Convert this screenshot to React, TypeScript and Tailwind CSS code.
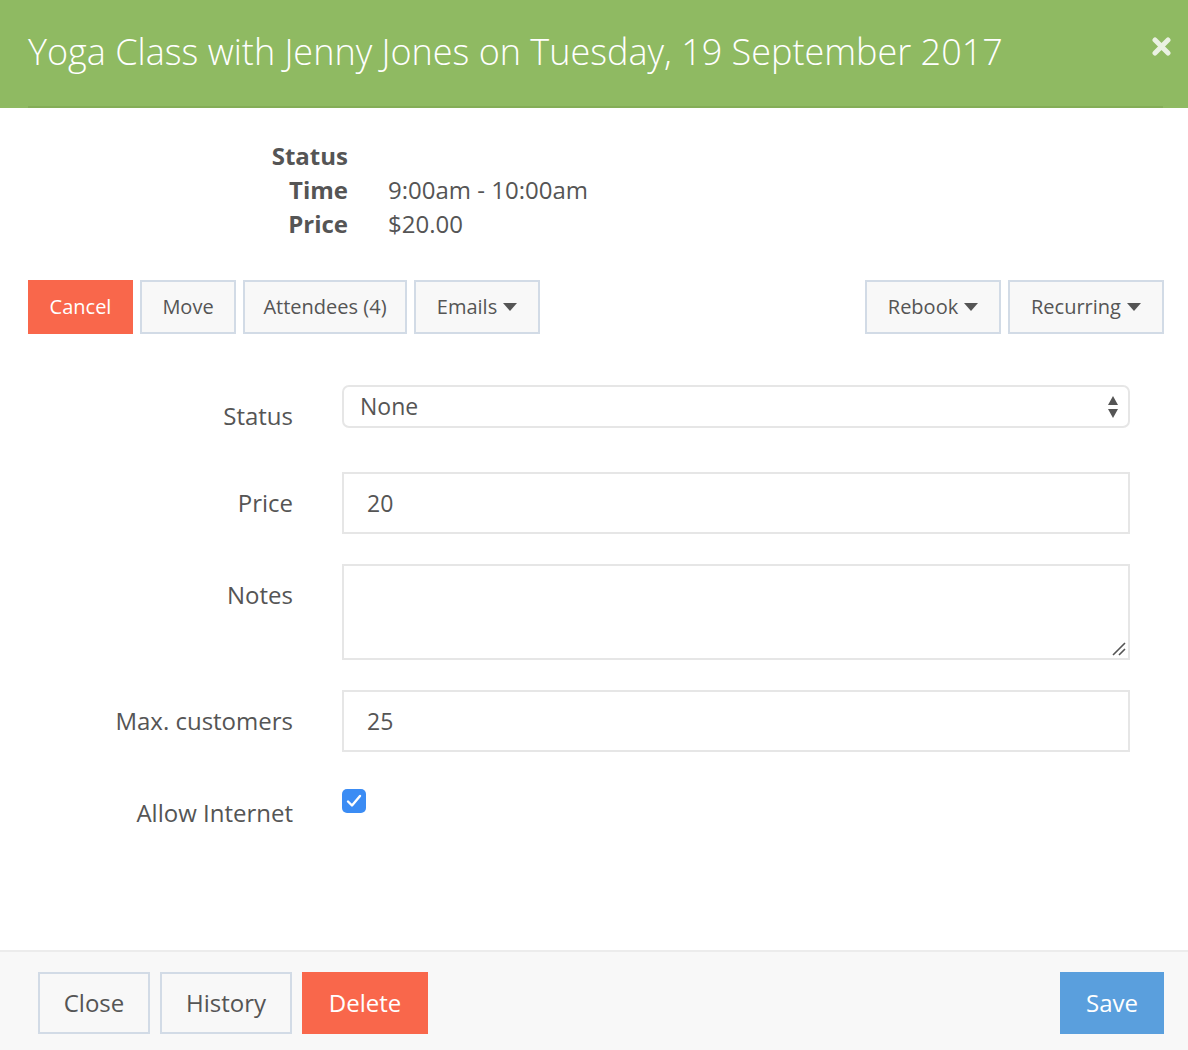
import { ReactNode } from "react";

const font = { fontFamily: '"Open Sans", "Liberation Sans", sans-serif' };

function Caret() {
  return (
    <svg width="14" height="8" viewBox="0 0 14 8" className="ml-[6px] inline-block">
      <path d="M0 0 L14 0 L7 8 Z" fill="#555555" />
    </svg>
  );
}

function OutlineButton({ children, className = "" }: { children: ReactNode; className?: string }) {
  return (
    <button
      type="button"
      className={`flex items-center justify-center border-2 border-[#d2dbe6] bg-[#f8f8f8] text-[#555] ${className}`}
    >
      {children}
    </button>
  );
}

function FormRow({ label, children, className = "" }: { label: string; children: ReactNode; className?: string }) {
  return (
    <div className={`flex items-start ${className}`}>
      <label className="w-[293px] shrink-0 pt-[14px] text-right text-[24px] leading-[34px] text-[#555]">{label}</label>
      <div className="ml-[49px] w-[788px]">{children}</div>
    </div>
  );
}

export default function App() {
  return (
    <div className="min-h-[1050px] w-[1188px] bg-white" style={font}>
      <header className="relative h-[108px] bg-[#8fba62]">
        <h1 className="pl-[28px] pt-[27px] text-[36px] font-light leading-[50px] text-white">
          Yoga Class with Jenny Jones on Tuesday, 19 September 2017
        </h1>
        <svg
          className="absolute right-[17px] top-[37px]"
          width="19"
          height="19"
          viewBox="0 0 19 19"
        >
          <path d="M3 3 L16 16 M16 3 L3 16" stroke="#eaf1e2" strokeWidth="5" strokeLinecap="round" />
        </svg>
        <div className="absolute bottom-0 left-[28px] right-[25px] h-[2px] bg-[#84ad57]" />
      </header>

      <section className="pt-[31px]">
        <dl className="grid grid-cols-[348px_1fr] gap-x-[40px] text-[24px] leading-[34px] text-[#555]">
          <dt className="text-right font-bold">Status</dt>
          <dd />
          <dt className="text-right font-bold">Time</dt>
          <dd>9:00am - 10:00am</dd>
          <dt className="text-right font-bold">Price</dt>
          <dd>$20.00</dd>
        </dl>
      </section>

      <div className="mt-[39px] flex items-center justify-between pl-[28px] pr-[24px] text-[20px]">
        <div className="flex gap-[7px]">
          <button type="button" className="h-[54px] w-[105px] bg-[#f9674b] text-white">
            Cancel
          </button>
          <OutlineButton className="h-[54px] w-[96px]">Move</OutlineButton>
          <OutlineButton className="h-[54px] w-[164px]">Attendees (4)</OutlineButton>
          <OutlineButton className="h-[54px] w-[126px]">
            Emails
            <Caret />
          </OutlineButton>
        </div>
        <div className="flex gap-[7px]">
          <OutlineButton className="h-[54px] w-[136px]">
            Rebook
            <Caret />
          </OutlineButton>
          <OutlineButton className="h-[54px] w-[156px]">
            Recurring
            <Caret />
          </OutlineButton>
        </div>
      </div>

      <form className="pt-[51px]">
        <FormRow label="Status">
          <div className="flex h-[43px] items-center justify-between rounded-[7px] border-2 border-[#e6e6e6] pl-[16px] pr-[10px] text-[23px] text-[#555]">
            <span>None</span>
            <svg width="10" height="22" viewBox="0 0 10 22">
              <path d="M5 0 L10 9 L0 9 Z M0 13 L10 13 L5 22 Z" fill="#555" />
            </svg>
          </div>
        </FormRow>

        <FormRow label="Price" className="mt-[39px]">
          <div className="flex h-[62px] items-center border-2 border-[#e6e6e6] pl-[23px] text-[23px] text-[#555]">20</div>
        </FormRow>

        <FormRow label="Notes" className="mt-[30px]">
          <div className="relative h-[96px] border-2 border-[#e6e6e6]">
            <svg className="absolute bottom-[2px] right-[2px]" width="14" height="14" viewBox="0 0 14 14">
              <path d="M1 13 L13 1 M7 13 L13 7" stroke="#555" strokeWidth="1.6" />
            </svg>
          </div>
        </FormRow>

        <FormRow label="Max. customers" className="mt-[30px]">
          <div className="flex h-[62px] items-center border-2 border-[#e6e6e6] pl-[23px] text-[23px] text-[#555]">25</div>
        </FormRow>

        <FormRow label="Allow Internet" className="mt-[30px]">
          <div className="mt-[7px] flex h-[24px] w-[24px] items-center justify-center rounded-[5px] bg-[#3b8cf4]">
            <svg width="16" height="14" viewBox="0 0 16 14">
              <path d="M2 7.5 L6 11.5 L14 2" stroke="white" strokeWidth="2.4" fill="none" strokeLinecap="round" strokeLinejoin="round" />
            </svg>
          </div>
        </FormRow>
      </form>

      <footer className="mt-[120px] flex h-[100px] items-start justify-between border-t-2 border-[#ececec] bg-[#f8f8f8] pl-[38px] pr-[24px] pt-[20px] text-[24px]">
        <div className="flex gap-[10px]">
          <OutlineButton className="h-[62px] w-[112px]">Close</OutlineButton>
          <OutlineButton className="h-[62px] w-[132px]">History</OutlineButton>
          <button type="button" className="h-[62px] w-[126px] bg-[#f9674b] text-white">
            Delete
          </button>
        </div>
        <button type="button" className="h-[62px] w-[104px] bg-[#5a9fdd] text-white">
          Save
        </button>
      </footer>
    </div>
  );
}
